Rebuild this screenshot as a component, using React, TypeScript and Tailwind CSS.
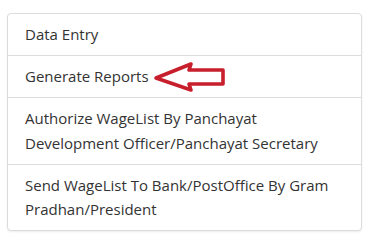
import React from 'react';

const items = [
    'Data Entry',
    'Generate Reports',
    'Authorize WageList By Panchayat Development Officer/Panchayat Secretary',
    'Send WageList To Bank/PostOffice By Gram Pradhan/President',
];

const Arrow = () => (
    <svg width="74" height="32" viewBox="0 0 74 32" className="absolute left-[145px] top-[5px]">
        <path
            d="M3 17 L38 3 L36 9 L70 9 L70 23 L36 23 L38 29 Z"
            fill="none"
            stroke="#c81f2c"
            strokeWidth="3.6"
            strokeLinejoin="round"
        />
    </svg>
);

const App = () => {
    return (
        <div className="w-[369px] h-[246px] bg-white pt-[13px] pl-[7px]" style={{ fontFamily: '"Open Sans", sans-serif' }}>
            <div className="w-[355px] border border-[#dcdcdc] rounded-[4px] shadow-[0_1px_2px_rgba(0,0,0,0.08)] bg-white">
                {items.map((item, i) => (
                    <div
                        key={item}
                        className={`relative px-[17px] py-[8.25px] text-[15px] leading-[24.5px] text-[#333] ${i > 0 ? 'border-t border-[#dcdcdc]' : ''}`}
                    >
                        {item}
                        {i === 1 && <Arrow />}
                    </div>
                ))}
            </div>
        </div>
    );
};

export default App;
